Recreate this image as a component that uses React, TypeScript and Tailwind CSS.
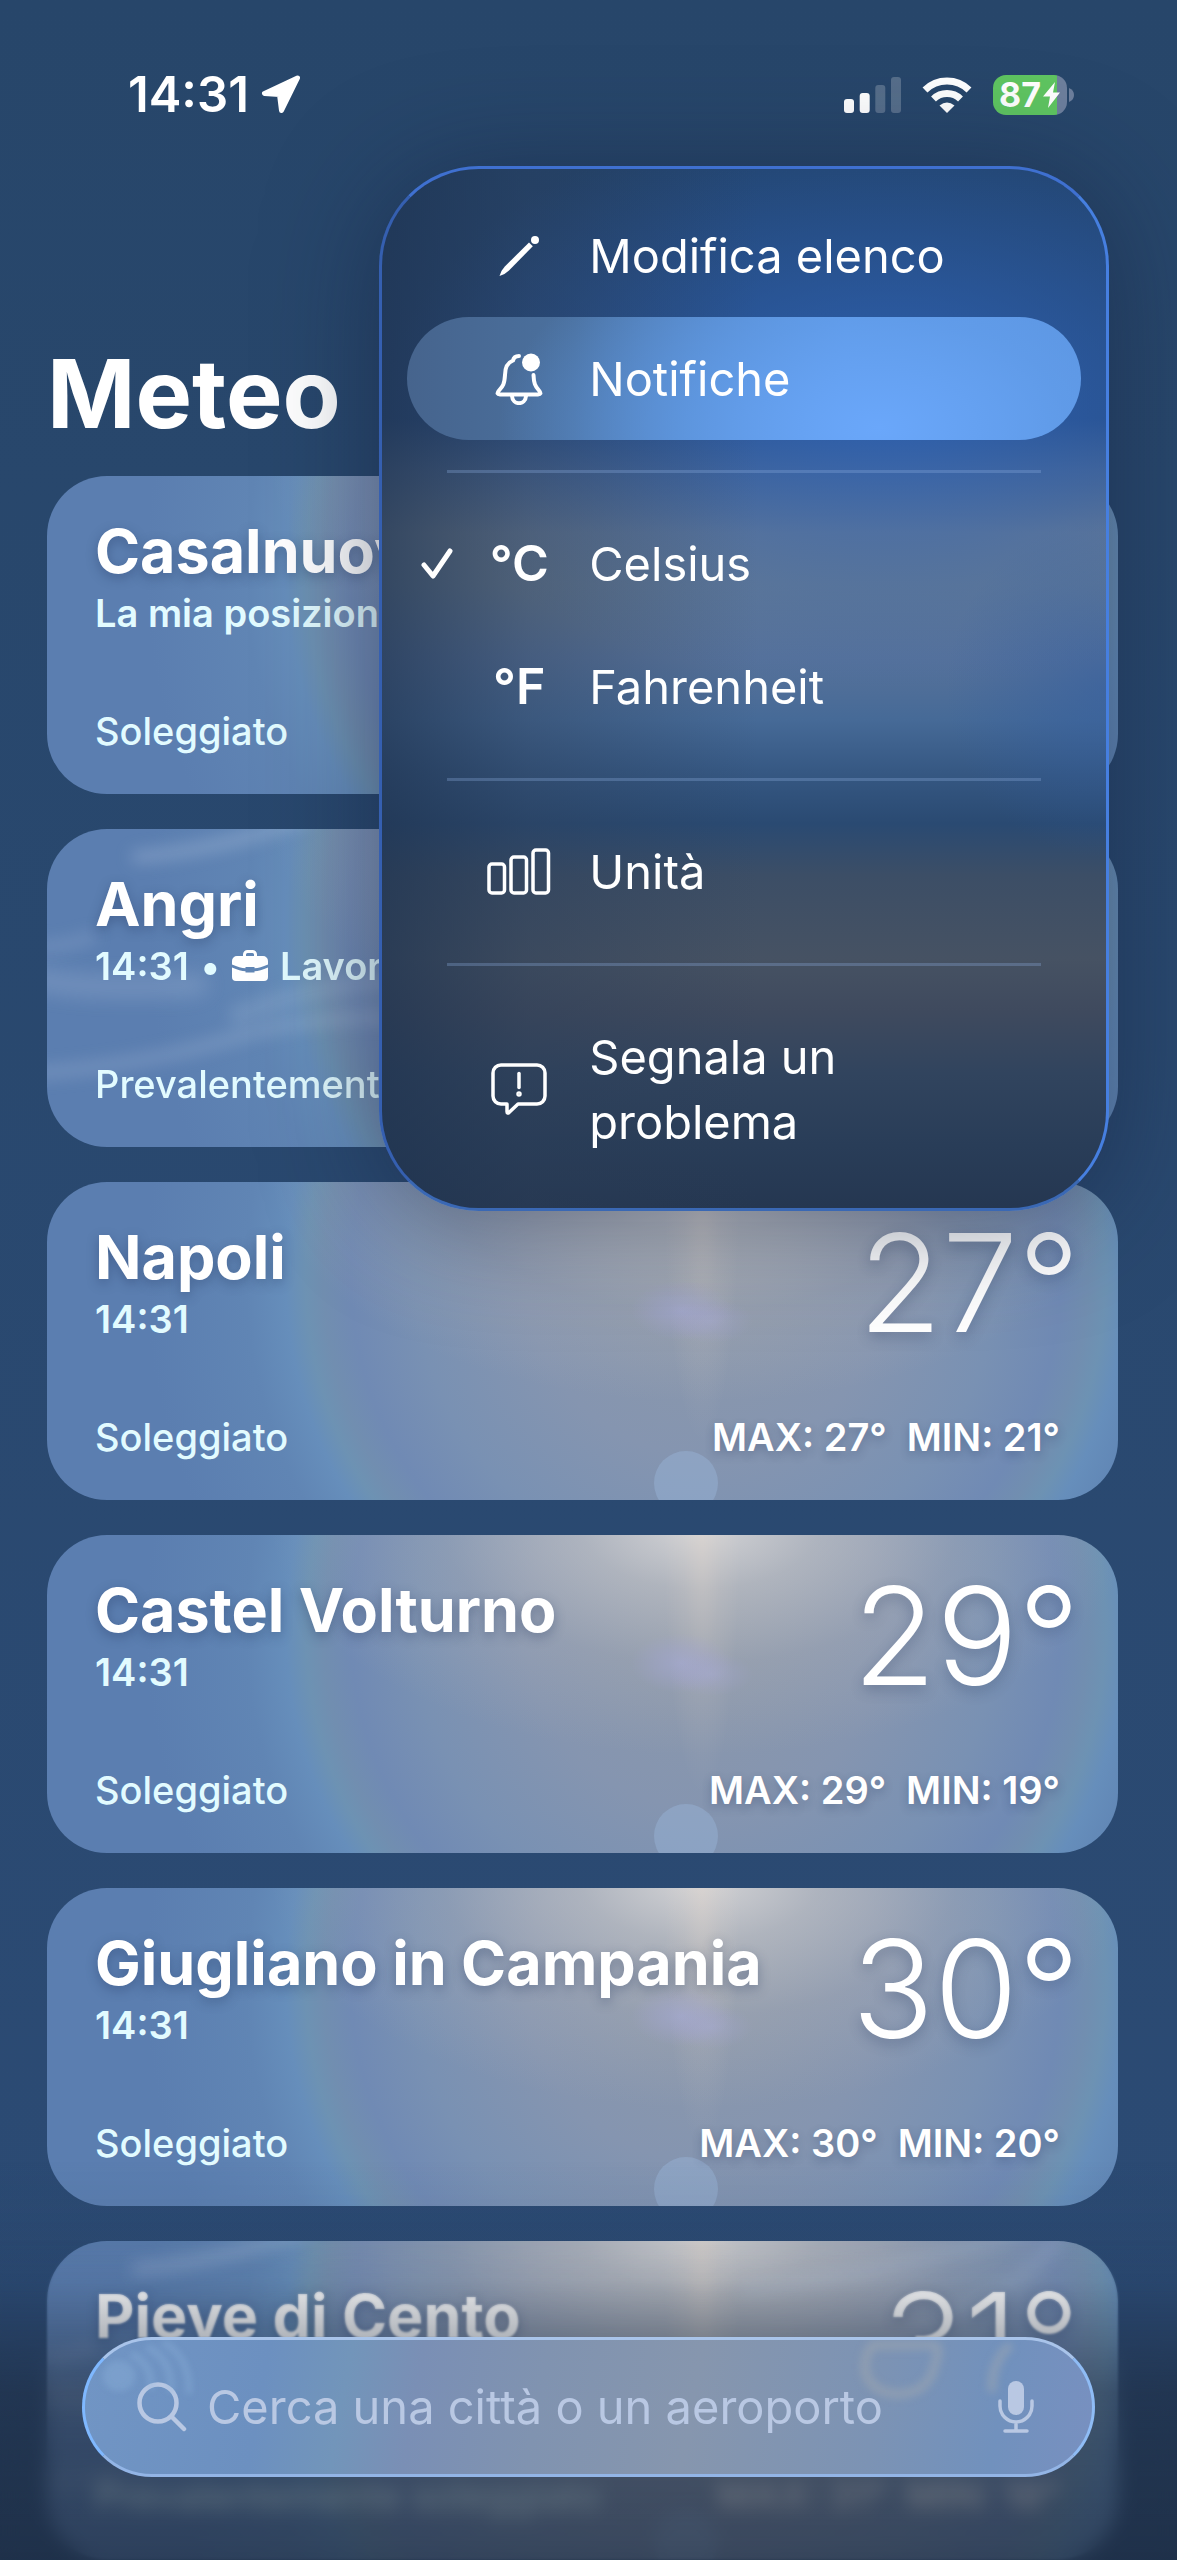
import React from 'react';
import clsx from 'clsx';

interface City {
  name: string;
  subtitle?: string;
  tag?: string;
  condition: string;
  temp?: string;
  max?: string;
  min?: string;
  cloudy?: boolean;
}

const cities: City[] = [
  { name: 'Casalnuovo', subtitle: 'La mia posizione', condition: 'Soleggiato' },
  { name: 'Angri', subtitle: '14:31', tag: 'Lavoro', condition: 'Prevalentemente', cloudy: true },
  { name: 'Napoli', subtitle: '14:31', condition: 'Soleggiato', temp: '27°', max: '27°', min: '21°' },
  { name: 'Castel Volturno', subtitle: '14:31', condition: 'Soleggiato', temp: '29°', max: '29°', min: '19°' },
  { name: 'Giugliano in Campania', subtitle: '14:31', condition: 'Soleggiato', temp: '30°', max: '30°', min: '20°' },
  {
    name: 'Pieve di Cento',
    condition: 'Prevalentemente soleggiato',
    temp: '31°',
    max: '31°',
    min: '18°',
    cloudy: true,
  },
];

/* ---------- Icons ---------- */

const LocationIcon = () => (
  <svg viewBox="0 0 40 40" className="w-10 h-10" fill="#fff" stroke="#fff" strokeWidth="5" strokeLinejoin="round">
    <path d="M36.5 3 3.5 18.5 18.5 19.5 20.5 35.5Z" />
  </svg>
);

const SignalIcon = () => (
  <svg viewBox="0 0 57 36" className="w-[57px] h-9" fill="#fff">
    <rect x="0" y="22" width="10" height="14" rx="3" />
    <rect x="15.7" y="16" width="10" height="20" rx="3" />
    <rect x="31.3" y="8" width="10" height="28" rx="3" opacity=".22" />
    <rect x="47" y="0" width="10" height="36" rx="3" opacity=".22" />
  </svg>
);

const WifiIcon = () => (
  <svg viewBox="0 0 50 36" className="w-[50px] h-9" fill="none" stroke="#fff" strokeWidth="7">
    <path d="M3 13a31.500 31.500 0 0 1 44 0" />
    <path d="M11.500 22a19.500 19.500 0 0 1 27 0" />
    <path d="M25 36 17.500 28.500Q25 22.500 32.500 28.500Z" fill="#fff" stroke="none" />
  </svg>
);

const BatteryIcon = () => (
  <div className="flex items-center gap-0.5">
    <div className="flex h-10 w-[74px] items-center gap-0.5 rounded-[13px] bg-linear-to-r from-[#5fc561] from-87% to-[#6d7f9d] to-87% pl-1.5">
      <span className="text-[34px] leading-10 font-bold">87</span>
      <svg viewBox="0 0 17 26" className="w-[17px] h-[26px] shrink-0" fill="#fff">
        <path d="M12 0 0 14.500H7L5 26 17 10.500H10Z" />
      </svg>
    </div>
    <svg viewBox="0 0 5 14" className="w-[5px] h-3.5" fill="#6d7f9d">
      <path d="M0 0Q5 2 5 7T0 14Z" />
    </svg>
  </div>
);

const BriefcaseIcon = () => (
  <svg viewBox="0 0 36 32" className="w-9 h-8" fill="#fff">
    <path d="M11 6V4.500A4.500 4.500 0 0 1 15.500 0h5A4.500 4.500 0 0 1 25 4.500V6h6a5 5 0 0 1 5 5v3.500Q28 18 22.500 18.300V17h-9v1.300Q8 18 0 14.500V11a5 5 0 0 1 5-5ZM14 6h8V4.500A1.500 1.500 0 0 0 20.500 3h-5A1.500 1.500 0 0 0 14 4.500Z" />
    <path d="M0 17.500Q8 21 13.500 21.300V22.500h9V21.300Q28 21 36 17.500V27a4 4 0 0 1-4 4H4a4 4 0 0 1-4-4Z" />
  </svg>
);

const PencilIcon = () => (
  <svg viewBox="0 0 42 42" className="w-[42px] h-[42px]" fill="#fff">
    <path d="M31 7.500 34.800 11.200 11 35.500Q7 39.500 1.500 41 3 35.500 6.800 31.500Z" />
    <circle cx="37" cy="5" r="4" />
  </svg>
);

const BellIcon = () => (
  <svg viewBox="0 0 48 52" className="w-12 h-[52px]" fill="none" stroke="#fff" strokeWidth="4" strokeLinecap="round" strokeLinejoin="round">
    <path d="M24 3C20.500 3 18.500 5 18 7.500 11.500 10 10 16 10 22 9.500 31 8 33 4 37.500 1.500 40.500 2.500 41.500 5 41.500H43C45.500 41.500 46.500 40.500 44 37.500 40 33 38.800 30 38.500 22" />
    <path d="M17 43C17.500 52.500 30.500 52.500 31 43" />
    <circle cx="36" cy="9.500" r="9" fill="#fff" stroke="none" />
  </svg>
);

const UnitsIcon = () => (
  <svg viewBox="0 0 64 47" className="w-16 h-[47px]" fill="none" stroke="#fff" strokeWidth="3.500">
    <rect x="2" y="16" width="15.500" height="29" rx="3" />
    <rect x="24" y="9" width="15.500" height="36" rx="3" />
    <rect x="46" y="2" width="15.500" height="43" rx="3" />
  </svg>
);

const ReportIcon = () => (
  <svg viewBox="0 0 56 52" className="w-14 h-[52px]" fill="none" stroke="#fff" strokeWidth="3.500" strokeLinecap="round" strokeLinejoin="round">
    <path d="M10 2H46A8 8 0 0 1 54 10V33A8 8 0 0 1 46 41H27L18 49.500Q16 51 16 48.500V41H10A8 8 0 0 1 2 33V10A8 8 0 0 1 10 2Z" />
    <path d="M28 10.500V24.500" />
    <circle cx="28" cy="31" r="1" fill="#fff" />
  </svg>
);

const CheckIcon = () => (
  <svg viewBox="0 0 32 32" className="w-8 h-8" fill="none" stroke="#fff" strokeWidth="5" strokeLinecap="round" strokeLinejoin="round">
    <path d="M3 17 12 28 29 3" />
  </svg>
);

const SearchIcon = () => (
  <svg viewBox="0 0 50 50" className="w-[50px] h-[50px] shrink-0" fill="none" stroke="#b9c8e3" strokeWidth="4.500" strokeLinecap="round">
    <circle cx="21" cy="21" r="18.500" />
    <path d="M34.500 34.500 47 47" />
  </svg>
);

const MicIcon = () => (
  <svg viewBox="0 0 36 52" className="w-9 h-[52px]" fill="none" stroke="#b9c8e3" strokeWidth="3.500" strokeLinecap="round">
    <rect x="10" y="0" width="16" height="34" rx="8" fill="#b9c8e3" stroke="none" />
    <path d="M2 20V25A16 16 0 0 0 34 25V20M18 41V49M7 50H29" />
  </svg>
);

/* ---------- City cards ---------- */

const Sky: React.FC<{ cloudy?: boolean }> = ({ cloudy }) => (
  <svg viewBox="0 0 1071 318" preserveAspectRatio="xMidYMid slice" className="absolute inset-0 h-full w-full" aria-hidden="true">
    <defs>
      <radialGradient id="flare">
        <stop offset="0" stopColor="#a6aad6" stopOpacity=".6" />
        <stop offset=".5" stopColor="#a3a6d2" stopOpacity=".35" />
        <stop offset="1" stopColor="#a3a4d0" stopOpacity="0" />
      </radialGradient>
      <radialGradient id="beam">
        <stop offset="0" stopColor="#e8dacd" stopOpacity=".35" />
        <stop offset=".5" stopColor="#e8dacd" stopOpacity=".12" />
        <stop offset="1" stopColor="#e8dacd" stopOpacity="0" />
      </radialGradient>
    </defs>
    <ellipse cx="655" cy="0" rx="38" ry="260" fill="url(#beam)" />
    <ellipse cx="634" cy="128" rx="50" ry="30" fill="url(#flare)" />
    <ellipse cx="664" cy="139" rx="42" ry="22" fill="url(#flare)" opacity=".7" />
    <circle cx="639" cy="301" r="32" fill="#9cb8dc" opacity=".42" />
    {cloudy && (
      <g fill="none" stroke="#c4d2e8" strokeLinecap="round">
        <g className="blur-[8px]">
          <path d="M90 28Q180 20 260 -12" strokeWidth="12" opacity=".32" />
          <path d="M-10 118Q20 118 45 108" strokeWidth="10" opacity=".22" />
          <path d="M190 186Q280 150 420 146" strokeWidth="16" opacity=".2" />
          <path d="M-10 244Q100 236 190 208T420 192" strokeWidth="12" opacity=".24" />
          <path d="M700 50Q850 30 980 -10M900 70Q960 60 1010 0" strokeWidth="14" opacity=".18" />
        </g>
        <path d="M-10 150Q40 162 150 156" strokeWidth="22" opacity=".22" className="blur-[10px]" />
      </g>
    )}
  </svg>
);

const CityCard: React.FC<{ city: City }> = ({ city }) => (
  <li className="relative h-[318px] overflow-hidden rounded-[60px] bg-[radial-gradient(ellipse_430px_230px_at_61%_-10px,rgba(226,223,221,0.85),rgba(206,204,203,0.55)_28%,rgba(186,184,186,0.26)_60%,transparent),radial-gradient(circle_at_61.500%_94px,#8c98aa_0,#8595b0_180px,#7991b3_290px,#708ab4_355px,#718eb0_382px,#6d92b3_400px,#668ebb_420px,#6085b4_460px,#5b7eb0_560px)]">
    <Sky cloudy={city.cloudy} />
    <div className="relative flex h-full flex-col justify-between pt-[37px] pr-[38px] pb-[39px] pl-12">
      <div className="flex justify-between">
        <div>
          <h2 className="text-[61px] leading-[76px] font-bold whitespace-nowrap [text-shadow:0_4px_12px_rgba(30,50,90,0.35)]">
            {city.name}
          </h2>
          {city.subtitle && (
            <p className="flex items-center gap-3 text-[38px] leading-[48px] font-semibold whitespace-nowrap text-[#e2fbff]">
              {city.subtitle}
              {city.tag && (
                <>
                  <span>•</span>
                  <BriefcaseIcon />
                  <span>{city.tag}</span>
                </>
              )}
            </p>
          )}
        </div>
        {city.temp && (
          <span className="text-[136px] leading-[128px] font-light [text-shadow:0_5px_14px_rgba(30,50,90,0.3)]">
            {city.temp}
          </span>
        )}
      </div>
      <div className="flex justify-between text-[38px] leading-[48px] font-medium">
        <span className="text-[#e2fbff]">{city.condition}</span>
        {city.max && (
          <span className="flex gap-5 pr-5 font-semibold [text-shadow:0_4px_10px_rgba(30,50,90,0.3)]">
            <span>MAX: {city.max}</span>
            <span>MIN: {city.min}</span>
          </span>
        )}
      </div>
    </div>
  </li>
);

/* ---------- Menu ---------- */

interface MenuItemProps {
  icon: React.ReactNode;
  label: string;
  checked?: boolean;
  active?: boolean;
}

const MenuItem: React.FC<MenuItemProps> = ({ icon, label, checked, active }) => (
  <button
    role="menuitem"
    className={clsx(
      'flex w-full items-center rounded-[62px] py-[29px] text-left text-[47px] leading-[65px]',
      active &&
        'bg-[radial-gradient(ellipse_380px_220px_at_70%_90%,#6aa7fa,rgba(98,158,236,0.7)_50%,transparent),linear-gradient(to_right,#46648d,#4b719f_25%,#5688c8_48%,#5f99e6_65%,#5a92dd)]'
    )}
  >
    <span className="flex w-[70px] shrink-0 justify-end pr-6">
      {checked && <CheckIcon />}
    </span>
    <span className="flex w-[84px] shrink-0 justify-center text-[50px] font-semibold">{icon}</span>
    <span className="ml-7 max-w-[370px] grow">{label}</span>
  </button>
);

const MenuDivider = () => <hr className="mx-10 mt-[30px] mb-[29px] h-[3px] border-0 bg-[#8fb0e0]/30" />;

const OptionsMenu = () => (
  <div
    role="menu"
    className="absolute top-[166px] right-[68px] z-20 w-[62%] rounded-[100px] border-[3px] border-t-[#3f70d0] border-r-[#467fe0] border-b-[#3a68b4] border-l-[#355fb0] bg-[linear-gradient(to_right,rgba(32,52,80,0.72),rgba(42,60,86,0.4)_20%,transparent_52%),radial-gradient(ellipse_500px_290px_at_70%_22%,rgba(48,104,192,0.75),rgba(46,100,184,0.42)_50%,transparent),radial-gradient(ellipse_160px_170px_at_100%_50%,rgba(48,92,160,0.5),transparent),linear-gradient(#22436c,#26487a_24%,#4a6388_29%,#6a7a8e_35%,#677a90_40%,#57729a_47%,#466a97_53%,#365883_58%,#2a4a72_63%,#3c4e66_68%,#465263_76%,#3f4a5e_81%,#31445e_87%,#293d58_94%,#253751)] px-[25px] py-[25px] shadow-[0_10px_110px_rgba(20,32,60,0.5)]"
  >
    <MenuItem icon={<PencilIcon />} label="Modifica elenco" />
    <MenuItem icon={<BellIcon />} label="Notifiche" active />
    <MenuDivider />
    <MenuItem icon="°C" label="Celsius" checked />
    <MenuItem icon="°F" label="Fahrenheit" />
    <MenuDivider />
    <MenuItem icon={<UnitsIcon />} label="Unità" />
    <MenuDivider />
    <MenuItem icon={<ReportIcon />} label="Segnala un problema" />
  </div>
);

/* ---------- Search ---------- */

const SearchBar = () => (
  <div className="fixed inset-x-0 bottom-0 z-10 px-[82px] pt-[137px] pb-[83px]">
    {/* Soft fade behind the bar */}
    <div className="absolute inset-x-0 bottom-0 h-[320px] mask-[linear-gradient(transparent,black_30%)] backdrop-blur-[1px]" />
    <div className="absolute inset-x-0 bottom-0 h-[220px] mask-[linear-gradient(transparent,black_60%)] backdrop-blur-[9px]" />
    <div className="absolute inset-x-0 bottom-0 h-[400px] bg-[linear-gradient(transparent,rgba(28,40,58,0.1)_30%,rgba(28,40,58,0.58)_58%,rgba(26,38,56,0.7))]" />

    <form className="relative flex h-[140px] items-center overflow-hidden rounded-full border-[3px] border-t-[#a9c4ea] border-r-[#8fbcf5] border-b-[#93b5e6] border-l-[#7fb8ff] bg-[linear-gradient(100deg,#7195c4,#6c90c0_18%,#7295ba_26%,#7a8fb5_33%,#8093b0_45%,#8696ae_60%,#7c93b4_78%,#7191bd_90%,#7890c0)] pr-[58px] pl-[52px]">
      <svg viewBox="0 0 1007 134" className="absolute inset-0 h-full w-full" fill="none" aria-hidden="true">
        <g stroke="#8fb4dc" strokeWidth="7" opacity=".35" className="blur-[3px]">
          <ellipse cx="34" cy="36" rx="13" ry="12" fill="#8fb4dc" />
          <path d="M46 14Q68 24 66 50M62 7Q88 20 86 52M78 2Q106 18 104 54" />
        </g>
        <g stroke="#a9adb0" strokeWidth="8" opacity=".5" className="blur-[4px]">
          <path d="M788 5H850Q856 8 850 24 844 54 812 54 784 52 780 30 779 14 788 5Z" />
          <path d="M926 5Q906 20 907 52" />
        </g>
      </svg>
      <SearchIcon />
      <input
        type="search"
        aria-label="Cerca una città o un aeroporto"
        placeholder="Cerca una città o un aeroporto"
        className="relative mx-5 min-w-0 grow bg-transparent text-[47px] leading-[64px] outline-none placeholder:text-[#b9c8e3]"
      />
      <button type="button" aria-label="Dettatura" className="relative">
        <MicIcon />
      </button>
    </form>
  </div>
);

const App: React.FC = () => {
  return (
    <div className="relative min-h-screen overflow-hidden bg-linear-to-b from-[#27466a] to-[#2c4b75] font-['Inter',sans-serif] text-white">
      <div className="flex h-[119px] items-end justify-between pr-[103px] pl-32">
        <div className="flex h-12 items-center gap-3 text-[49px] leading-[48px] font-semibold">
          <span>14:31</span>
          <LocationIcon />
        </div>
        <div className="flex h-12 items-center gap-[21px]">
          <SignalIcon />
          <WifiIcon />
          <BatteryIcon />
        </div>
      </div>

      <header className="mt-[217px] px-[47px]">
        <h1 className="text-[95px] leading-[116px] font-bold">Meteo</h1>
      </header>

      <main className="mt-6 pr-[59px] pl-[47px]">
        <ul className="flex flex-col gap-[35px]">
          {cities.map((city) => (
            <CityCard key={city.name} city={city} />
          ))}
        </ul>
      </main>

      <OptionsMenu />
      <SearchBar />
    </div>
  );
};

export default App;
